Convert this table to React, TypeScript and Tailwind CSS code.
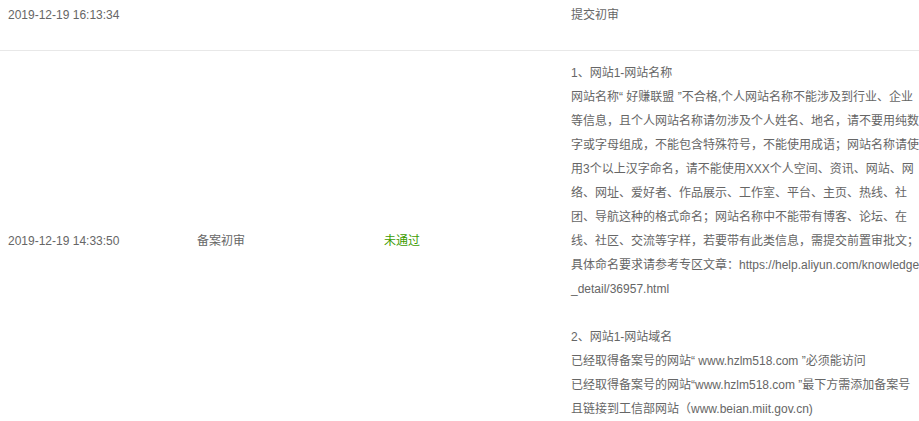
const rows = [
  {
    time: "2019-12-19 16:13:34",
    type: "",
    status: "",
    remark: ["提交初审"],
    top: true,
  },
  {
    time: "2019-12-19 14:33:50",
    type: "备案初审",
    status: "未通过",
    remark: [
      "1、网站1-网站名称",
      "网站名称“ 好赚联盟 ”不合格,个人网站名称不能涉及到行业、企业等信息，且个人网站名称请勿涉及个人姓名、地名，请不要用纯数字或字母组成，不能包含特殊符号，不能使用成语；网站名称请使用3个以上汉字命名，请不能使用XXX个人空间、资讯、网站、网络、网址、爱好者、作品展示、工作室、平台、主页、热线、社团、导航这种的格式命名；网站名称中不能带有博客、论坛、在线、社区、交流等字样，若要带有此类信息，需提交前置审批文；具体命名要求请参考专区文章：https://help.aliyun.com/knowledge_detail/36957.html",
      "",
      "2、网站1-网站域名",
      "已经取得备案号的网站“ www.hzlm518.com ”必须能访问",
      "已经取得备案号的网站“www.hzlm518.com ”最下方需添加备案号且链接到工信部网站（www.beian.miit.gov.cn)",
    ],
    top: false,
  },
]

export default function App() {
  return (
    <div
      className="w-[919px] h-[421px] overflow-hidden bg-white text-[12px] leading-[24px] text-[#666]"
      style={{ fontFamily: '"Liberation Sans", Arial, "Noto Sans CJK SC", sans-serif' }}
    >
      <table className="table-fixed border-collapse w-[931px]">
        <colgroup>
          <col className="w-[189px]" />
          <col className="w-[187px]" />
          <col className="w-[187px]" />
          <col className="w-[368px]" />
        </colgroup>
        <tbody>
          {rows.map((r, i) => (
            <tr key={i} className="border-b border-[#e8e8e8] align-middle">
              <td className={r.top ? "pl-2 pt-[3px] pb-[23px]" : "pl-2 py-[10px]"}>{r.time}</td>
              <td className={r.top ? "pl-2 pt-[3px] pb-[23px]" : "pl-2 py-[10px]"}>{r.type}</td>
              <td className={(r.top ? "pl-2 pt-[3px] pb-[23px]" : "pl-2 py-[10px]") + " text-[#3d9c00]"}>
                {r.status}
              </td>
              <td className={r.top ? "pl-2 pt-[3px] pb-[23px]" : "pl-2 py-[10px]"}>
                <div className="w-[350px] break-all">
                  {r.remark.map((line, j) => (
                    <p key={j} className="min-h-[24px]">
                      {line}
                    </p>
                  ))}
                </div>
              </td>
            </tr>
          ))}
        </tbody>
      </table>
    </div>
  )
}
